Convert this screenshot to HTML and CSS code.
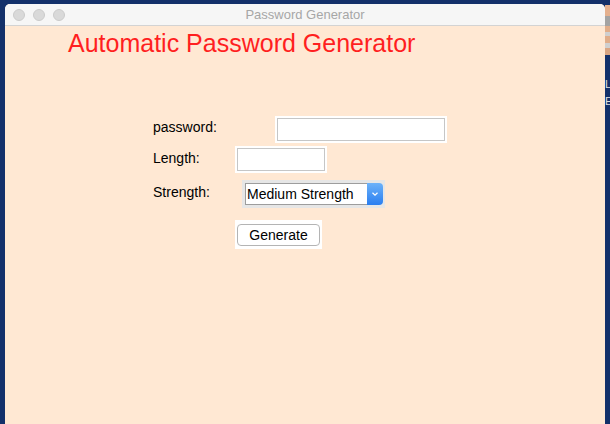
FILE: index.html
```html
<!DOCTYPE html>
<html>
<head>
<meta charset="utf-8">
<title>Password Generator</title>
<link rel="stylesheet" href="styles.css">
</head>
<body>
<div class="desktop">
  <div class="window">
    <div class="titlebar">
      <div class="lights"><span class="light"></span><span class="light"></span><span class="light"></span></div>
      <div class="title">Password Generator</div>
      <div></div>
    </div>
    <div class="content">
      <h1 class="heading">Automatic Password Generator</h1>
      <div class="form">
        <div class="row row-pass">
          <span class="label">password:</span>
          <div class="entry entry-pass"><input class="field" type="text"></div>
        </div>
        <div class="row row-len">
          <span class="label">Length:</span>
          <div class="entry entry-len"><input class="field" type="text"></div>
        </div>
        <div class="row row-str">
          <span class="label">Strength:</span>
          <div class="combo">
            <div class="combo-text">Medium Strength</div>
            <div class="combo-btn">
              <svg width="8" height="6" viewBox="0 0 8 6"><polyline points="1.5,1.8 4,4.2 6.5,1.8" fill="none" stroke="#fff" stroke-width="1.2"/></svg>
            </div>
          </div>
        </div>
        <div class="row row-btn">
          <div class="btn-wrap"><button class="btn">Generate</button></div>
        </div>
      </div>
    </div>
  </div>
  <div class="side">
    <div class="s s0"></div>
    <div class="s s1"></div>
    <div class="s s2"></div>
    <div class="s s3"></div>
    <div class="s s4"></div>
    <div class="s s5"></div>
    <div class="s s6"></div>
    <div class="s s7"></div>
    <div class="letters">L<br>E</div>
  </div>
</div>
</body>
</html>
```

FILE: styles.css
```css
* { box-sizing: border-box; }

body {
  margin: 0;
  height: 424px;
  overflow: hidden;
  background: #13306a;
  font-family: "Liberation Sans", Arial, sans-serif;
}

.desktop {
  display: flex;
  height: 424px;
  padding: 4px 0 0 5px;
}

.window {
  width: 600px;
  height: 420px;
  display: flex;
  flex-direction: column;
  border-radius: 5px 5px 0 0;
  overflow: hidden;
  background: #ffe8d3;
}

.titlebar {
  height: 22px;
  background: #f6f6f6;
  border-bottom: 1px solid #d3d3d3;
  display: grid;
  grid-template-columns: 1fr auto 1fr;
  align-items: center;
}

.lights {
  display: flex;
  gap: 8px;
  padding-left: 8px;
}

.light {
  width: 12px;
  height: 12px;
  border-radius: 50%;
  background: #d9d9d9;
  border: 1px solid #cbcbcb;
}

.title {
  font-size: 13px;
  line-height: 21px;
  color: #a6a6a6;
}

.content {
  flex: 1;
  padding-left: 63px;
}

.heading {
  margin: 3px 0 0;
  font-size: 25px;
  font-weight: normal;
  line-height: 28px;
  color: #ff1f1f;
}

.form {
  margin: 59px 0 0 85px;
}

.row {
  display: flex;
  align-items: flex-start;
}

.label {
  width: 70px;
  font-size: 14px;
  line-height: 16px;
  color: #000;
  margin-top: 4px;
}

.row-pass .label { margin-top: 3px; }
.row-len { margin-top: 3px; }
.row-str { margin-top: 7px; }
.row-btn { margin-top: 12px; }

.entry {
  background: #fff;
  padding: 2px;
}

.field {
  display: block;
  margin: 0;
  padding: 0 2px;
  height: 23px;
  border: 1px solid #c6c6c6;
  background: #fff;
  font: 14px "Liberation Sans", Arial, sans-serif;
  outline: none;
}

.entry-pass { margin-left: 52px; }
.entry-pass .field { width: 168px; }

.entry-len { margin-left: 12px; }
.entry-len .field { width: 88px; }

.combo {
  margin-left: 19px;
  display: flex;
  background: #e6e6e6;
  padding: 3px 2px 3px 3px;
}

.combo-text {
  width: 122px;
  height: 22px;
  border: 1px solid #9d9d9d;
  border-right: none;
  background: #fff;
  padding: 1px 0 0 1px;
  font-size: 14px;
  line-height: 19px;
  color: #000;
}

.combo-btn {
  width: 16px;
  height: 22px;
  border-radius: 0 4px 4px 0;
  background: linear-gradient(#6cb2f9, #2a7ef0);
  display: flex;
  align-items: center;
  justify-content: center;
}

.btn-wrap {
  margin-left: 82px;
  background: #fff;
  padding: 4px 2px 3px 2px;
}

.btn {
  display: block;
  width: 83px;
  height: 22px;
  margin: 0;
  padding: 0;
  border: 1px solid #b4b4b4;
  border-radius: 4px;
  background: #fff;
  color: #000;
  font: 14px "Liberation Sans", Arial, sans-serif;
}

.side {
  width: 5px;
  overflow: hidden;
  display: flex;
  flex-direction: column;
}

.s { width: 5px; flex: none; }
.s0 { height: 1px; background: #13306a; }
.s1 { height: 11px; background: #e4b08e; }
.s2 { height: 10px; background: #a3a3a3; }
.s3 { height: 6px; background: #e0ad8a; }
.s4 { height: 4px; background: #cfcfcf; }
.s5 { height: 7px; background: #e0ad8a; }
.s6 { height: 5px; background: #cfcfcf; }
.s7 { height: 7px; background: #d9a583; }

.letters {
  margin-top: 21px;
  font-size: 11px;
  line-height: 17px;
  color: #e0e0e0;
}
```
